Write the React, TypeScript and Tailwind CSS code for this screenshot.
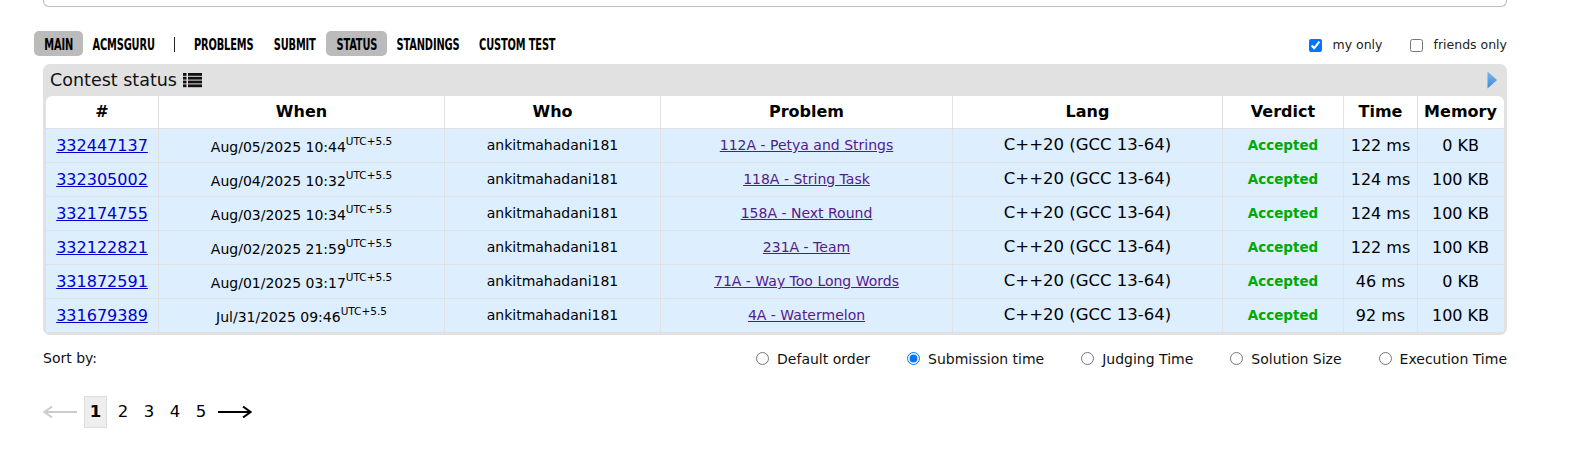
import React from "react";

const rows = [
  ["332447137", "Aug/05/2025 10:44", "112A - Petya and Strings", "122 ms", "0 KB"],
  ["332305002", "Aug/04/2025 10:32", "118A - String Task", "124 ms", "100 KB"],
  ["332174755", "Aug/03/2025 10:34", "158A - Next Round", "124 ms", "100 KB"],
  ["332122821", "Aug/02/2025 21:59", "231A - Team", "122 ms", "100 KB"],
  ["331872591", "Aug/01/2025 03:17", "71A - Way Too Long Words", "46 ms", "0 KB"],
  ["331679389", "Jul/31/2025 09:46", "4A - Watermelon", "92 ms", "100 KB"],
];

const menu: { label: string; w: string; active?: boolean; sep?: boolean }[] = [
  { label: "MAIN", w: "w-[49px]", active: true },
  { label: "ACMSGURU", w: "w-[82px]" },
  { label: "|", w: "w-[19px]", sep: true },
  { label: "PROBLEMS", w: "w-[79px]" },
  { label: "SUBMIT", w: "w-[63px]" },
  { label: "STATUS", w: "w-[61px]", active: true },
  { label: "STANDINGS", w: "w-[82px]" },
  { label: "CUSTOM TEST", w: "w-[96px]" },
];

const gridCols = "grid grid-cols-[112px_286px_216px_292px_270px_121px_74px_86px]";

function ListIcon() {
  return (
    <svg width="19" height="15" viewBox="0 0 19 15" className="ml-[6px]">
      {[0, 1, 2, 3].map((i) => (
        <g key={i} fill="#111">
          <rect x="0" y={i * 3.8} width="3.5" height="2.8" />
          <rect x="5" y={i * 3.8} width="14" height="2.8" />
        </g>
      ))}
    </svg>
  );
}

function BlueTriangle() {
  return (
    <svg width="10" height="18" viewBox="0 0 10 18">
      <defs>
        <linearGradient id="tg" x1="0" y1="0" x2="0" y2="1">
          <stop offset="0" stopColor="#7ab8ee" />
          <stop offset="1" stopColor="#3b8bd8" />
        </linearGradient>
      </defs>
      <path d="M0.5 0.5 L9.5 8.5 Q10 9 9.5 9.5 L0.5 17.5 Z" fill="url(#tg)" />
    </svg>
  );
}

function ArrowRight({ color }: { color: string }) {
  return (
    <svg width="34" height="14" viewBox="0 0 34 14">
      <path d="M0 7 H32" stroke={color} strokeWidth="2" />
      <path d="M25 1.5 L32.5 7 L25 12.5" stroke={color} strokeWidth="2" fill="none" />
    </svg>
  );
}

function ArrowLeft({ color }: { color: string }) {
  return (
    <svg width="34" height="14" viewBox="0 0 34 14">
      <path d="M2 7 H34" stroke={color} strokeWidth="2" />
      <path d="M9 1.5 L1.5 7 L9 12.5" stroke={color} strokeWidth="2" fill="none" />
    </svg>
  );
}

export default function App() {
  return (
    <div className="w-[1596px] h-[467px] bg-white overflow-hidden text-black font-['Verdana','DejaVu_Sans',sans-serif]">
      <div className="ml-[43px] w-[1464px]">
        {/* top box remainder */}
        <div className="h-[7px] border border-t-0 border-[#bcbcbc] rounded-b-[6px]" />

        {/* menu row */}
        <div className="mt-[24px] h-[25px] flex items-center justify-between">
          <div className="-ml-[9px] flex h-full items-center font-['DejaVu_Sans_Condensed','DejaVu_Sans',sans-serif] font-bold text-[15px]">
            {menu.map((m) =>
              m.sep ? (
                <div key={m.label} className={`${m.w} h-full flex items-center justify-center`}>
                  <div className="mt-[2px] w-[1px] h-[15px] bg-[#222]" />
                </div>
              ) : (
                <div
                  key={m.label}
                  className={`${m.w} h-full flex items-center justify-center rounded-[5px] ${m.active ? "bg-[#bbbbbb]" : ""}`}
                >
                  <span className="inline-block whitespace-nowrap scale-x-[0.73] tracking-[-0.2px] translate-y-[2px]">
                    {m.label}
                  </span>
                </div>
              )
            )}
          </div>
          <div className="mt-[4px] flex items-center text-[12.5px] text-[#222]">
            <input type="checkbox" checked readOnly className="m-0 w-[13px] h-[13px]" />
            <span className="ml-[11px]">my only</span>
            <input type="checkbox" readOnly className="ml-[27px] m-0 w-[13px] h-[13px]" />
            <span className="ml-[11px]">friends only</span>
          </div>
        </div>

        {/* contest status box */}
        <div className="mt-[8px] bg-[#e1e1e1] rounded-[7px] px-[3px] pb-[3px]">
          <div className="h-[32px] flex items-center justify-between pl-[4px] pr-[7px]">
            <div className="flex items-center text-[17.5px] text-[#111]">
              <span>Contest status</span>
              <ListIcon />
            </div>
            <BlueTriangle />
          </div>
          <div className="bg-white rounded-t-[6px] overflow-hidden">
            <div className={`${gridCols} h-[32px] text-[16px] font-bold`}>
              {["#", "When", "Who", "Problem", "Lang", "Verdict", "Time", "Memory"].map((h, i) => (
                <div
                  key={h}
                  className={`flex items-center justify-center ${i > 0 ? "border-l border-[#e1e1e1]" : ""}`}
                >
                  {h}
                </div>
              ))}
            </div>
            {rows.map((r) => (
              <div key={r[0]} className={`${gridCols} h-[34px] bg-[#ddeeff] border-t border-[#e1e1e1]`}>
                <div className="flex items-center justify-center text-[16px]">
                  <a className="text-[#0000cc] underline">{r[0]}</a>
                </div>
                <div className="flex items-center justify-center border-l border-[#e1e1e1]">
                  <span className="inline-flex items-start mt-[3px]">
                    <span className="text-[14px] leading-[16px]">{r[1]}</span>
                    <span className="text-[10.5px] leading-[10px] -mt-[3px]">UTC+5.5</span>
                  </span>
                </div>
                <div className="flex items-center justify-center border-l border-[#e1e1e1] text-[14px]">
                  ankitmahadani181
                </div>
                <div className="flex items-center justify-center border-l border-[#e1e1e1] text-[14px]">
                  <a className="text-[#551a8b] underline">{r[2]}</a>
                </div>
                <div className="flex items-center justify-center border-l border-[#e1e1e1] text-[16.5px]">
                  C++20 (GCC 13-64)
                </div>
                <div className="flex items-center justify-center border-l border-[#e1e1e1] text-[13.5px] font-bold text-[#00aa00]">
                  Accepted
                </div>
                <div className="flex items-center justify-center border-l border-[#e1e1e1] text-[16px]">
                  {r[3]}
                </div>
                <div className="flex items-center justify-center border-l border-[#e1e1e1] text-[16px]">
                  {r[4]}
                </div>
              </div>
            ))}
          </div>
        </div>

        {/* sort row */}
        <div className="mt-[13px] h-[20px] flex items-center justify-between">
          <span className="text-[14px] text-[#111]">Sort by:</span>
          <div className="mt-[3px] flex items-center gap-[37px] text-[14px] text-[#111]">
            {["Default order", "Submission time", "Judging Time", "Solution Size", "Execution Time"].map((s) => (
              <label key={s} className="flex items-center gap-[8px]">
                <input
                  type="radio"
                  name="sort"
                  readOnly
                  checked={s === "Submission time"}
                  className="m-0 -mt-[3px] w-[13px] h-[13px]"
                />
                <span>{s}</span>
              </label>
            ))}
          </div>
        </div>

        {/* pagination */}
        <div className="mt-[28px] h-[32px] flex items-center text-[16.5px]">
          <ArrowLeft color="#cccccc" />
          <div className="ml-[7px] w-[23px] h-[32px] flex items-center justify-center bg-[#eeeeee] border border-[#dddddd] font-bold">
            1
          </div>
          <div className="ml-[3px] flex">
            {["2", "3", "4", "5"].map((n) => (
              <div key={n} className="w-[26px] text-center">
                {n}
              </div>
            ))}
          </div>
          <div className="ml-[4px]">
            <ArrowRight color="#000000" />
          </div>
        </div>
      </div>
    </div>
  );
}
